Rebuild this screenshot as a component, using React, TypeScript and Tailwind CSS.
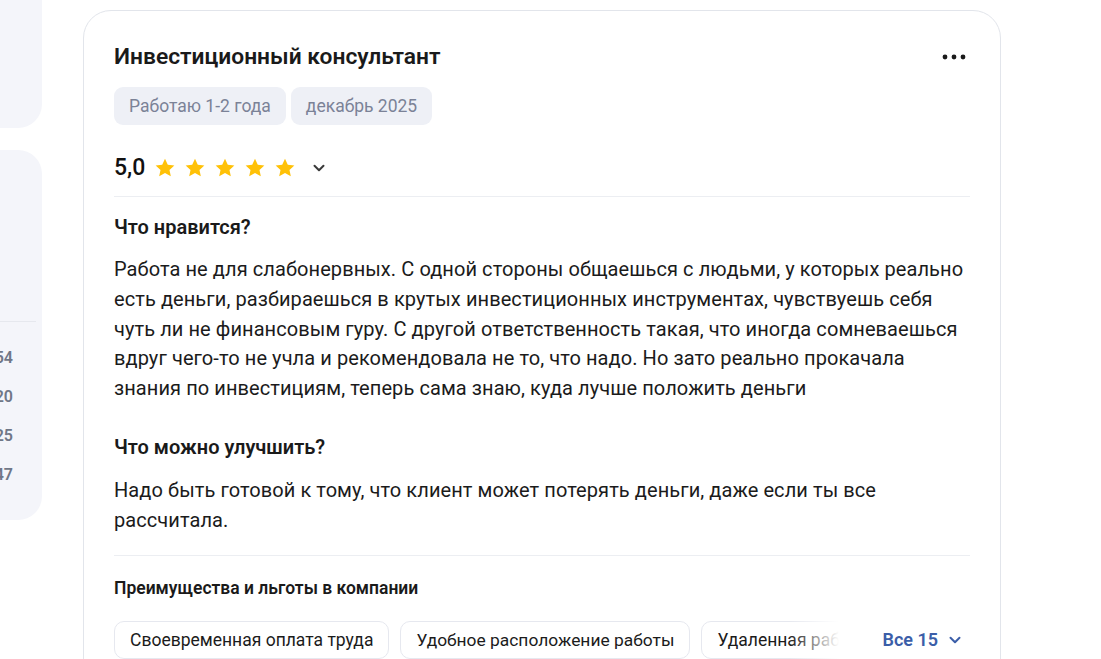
import React from "react";

const Star = () => (
  <svg width="22" height="22" viewBox="0 0 24 24" className="shrink-0">
    <path
      d="M12 1.8l3.05 6.6 7.15.8-5.3 4.85 1.45 7.05L12 17.5l-6.35 3.6 1.45-7.05L1.8 9.2l7.15-.8z"
      fill="#FFC107"
    />
  </svg>
);

const Chevron = ({ color, size = 14 }: { color: string; size?: number }) => (
  <svg width={size} height={size} viewBox="0 0 14 14" fill="none">
    <path d="M2.5 4.8L7 9.3l4.5-4.5" stroke={color} strokeWidth="2" strokeLinecap="round" strokeLinejoin="round" />
  </svg>
);

export default function App() {
  const font = { fontFamily: "Roboto, 'Noto Sans', Arial, sans-serif" };
  return (
    <div className="w-[1101px] h-[659px] overflow-hidden bg-white flex text-[#1b1b1b]" style={font}>
      {/* left column */}
      <div className="w-[42px] shrink-0 flex flex-col">
        <div className="h-[128px] bg-[#f4f5fa] rounded-br-[24px]" />
        <div className="mt-[22px] h-[370px] bg-[#f4f5fa] rounded-r-[24px] flex flex-col">
          <div className="h-[172px] border-b border-[#e6e8ee] mr-[6px]" />
          <div className="flex flex-col items-end pr-[29px] pt-[25px] gap-[17px] text-[16px] leading-[22px] font-semibold text-[#707787]">
            <span>54</span>
            <span>20</span>
            <span>25</span>
            <span>47</span>
          </div>
        </div>
      </div>

      {/* card */}
      <div className="ml-[41px] mt-[10px] w-[918px] h-[700px] border border-[#e2e5eb] rounded-[28px] px-[30px] pt-[32px] shrink-0">
        <div className="flex items-center justify-between">
          <h1 className="text-[22.8px] leading-[28px] font-semibold text-[#1a1a1a]">Инвестиционный консультант</h1>
          <svg width="26" height="6" viewBox="0 0 26 6" className="mr-[2px]">
            <circle cx="3" cy="3" r="2.4" fill="#1a1a1a" />
            <circle cx="12" cy="3" r="2.4" fill="#1a1a1a" />
            <circle cx="21" cy="3" r="2.4" fill="#1a1a1a" />
          </svg>
        </div>
        <div className="mt-[16px] flex gap-[5px]">
          <span className="bg-[#eef0f6] text-[#7b8297] text-[17.5px] leading-[24px] px-[15px] py-[7px] rounded-[9px]">Работаю 1-2 года</span>
          <span className="bg-[#eef0f6] text-[#7b8297] text-[17.5px] leading-[24px] px-[15px] py-[7px] rounded-[9px]">декабрь 2025</span>
        </div>
        <div className="mt-[29px] flex items-center h-[28px]">
          <span className="text-[23px] leading-[28px] font-medium text-[#111] mr-[9px]">5,0</span>
          <div className="flex gap-[8px]">
            <Star />
            <Star />
            <Star />
            <Star />
            <Star />
          </div>
          <span className="ml-[16px] flex items-center">
            <Chevron color="#3a3a3a" />
          </span>
        </div>
        <div className="mt-[14px] border-t border-[#eceef2]" />
        <h2 className="mt-[18px] text-[20px] leading-[24px] font-semibold text-[#1a1a1a]">Что нравится?</h2>
        <p className="mt-[16px] w-[851px] text-[20px] leading-[29.75px] tracking-[0.08px]">
          Работа не для слабонервных. С одной стороны общаешься с людьми, у которых реально есть деньги, разбираешься в крутых инвестиционных инструментах, чувствуешь себя чуть ли не финансовым гуру. С другой ответственность такая, что иногда сомневаешься вдруг чего-то не учла и рекомендовала не то, что надо. Но зато реально прокачала знания по инвестициям, теперь сама знаю, куда лучше положить деньги
        </p>
        <h2 className="mt-[31px] text-[20px] leading-[24px] font-semibold text-[#1a1a1a]">Что можно улучшить?</h2>
        <p className="mt-[17px] w-[851px] text-[20px] leading-[29.75px] tracking-[0.08px]">
          Надо быть готовой к тому, что клиент может потерять деньги, даже если ты все рассчитала.
        </p>
        <div className="mt-[20px] border-t border-[#eceef2]" />
        <h3 className="mt-[21px] text-[17.5px] leading-[22px] font-semibold text-[#1a1a1a]">Преимущества и льготы в компании</h3>
        <div className="mt-[22px] flex items-center">
          <div className="relative w-[725px] overflow-hidden">
            <div className="flex gap-[11px] whitespace-nowrap">
              <span className="border border-[#e6e8ef] rounded-[10px] px-[15px] py-[6px] text-[17.5px] leading-[24px]">Своевременная оплата труда</span>
              <span className="border border-[#e6e8ef] rounded-[10px] px-[15px] py-[6px] text-[17.4px] leading-[24px]">Удобное расположение работы</span>
              <span className="border border-[#e6e8ef] rounded-[10px] px-[15px] py-[6px] text-[17.5px] leading-[24px]">Удаленная работа</span>
            </div>
            <div className="absolute right-0 top-0 h-full w-[50px] bg-gradient-to-r from-white/0 to-white" />
          </div>
          <button className="ml-auto mr-[8px] flex items-center gap-[10px] text-[18px] leading-[24px] font-semibold text-[#3b5ea8]">
            Все 15
            <Chevron color="#3b5ea8" />
          </button>
        </div>
      </div>
    </div>
  );
}
